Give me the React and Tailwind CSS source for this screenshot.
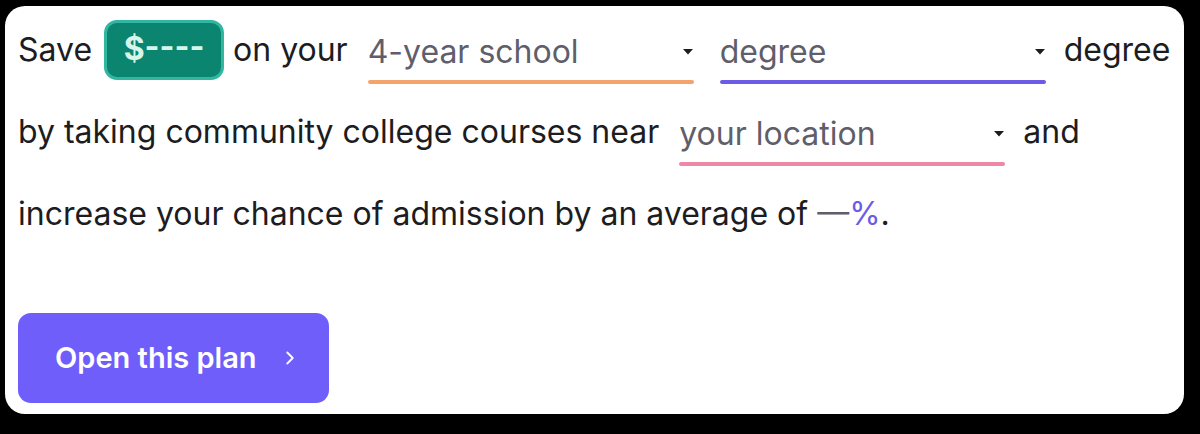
import { ChevronRight } from 'lucide-react';

const Caret = () => (
  <svg width="10" height="6" viewBox="0 0 10 6" className="shrink-0">
    <path d="M0 0 L10 0 L5 5.5 Z" fill="#1c1c21" />
  </svg>
);

const Picker = ({ label, line, className = '' }) => (
  <div className={`flex flex-col w-[326px] ${className}`}>
    <div className="flex items-center justify-between h-[44px] pr-[1px]">
      <span className="text-[#5f5e6b]">{label}</span>
      <Caret />
    </div>
    <div className={`h-[4px] rounded-full mt-[6px] ${line}`} />
  </div>
);

const App = () => {
  return (
    <div className="w-[1200px] h-[434px] bg-black pt-[6px] pl-[5px]" style={{ fontFamily: 'Inter, "Noto Sans", sans-serif' }}>
      <div className="w-[1179px] h-[408px] bg-white rounded-[20px] pl-[13px] text-[32px] text-[#1c1c21]">
        {/* row 1 */}
        <div className="flex items-center h-[86px] pt-[2px]">
          <span>Save</span>
          <div className="ml-[12px] w-[120px] h-[60px] rounded-[13px] bg-[#0b8470] border-[3px] border-[#30b6a1] flex items-center justify-center text-[#d6f6ec] font-bold text-[32px] pb-[2px]">
            $----
          </div>
          <span className="ml-[9px]">on your</span>
          <Picker label="4-year school" line="bg-[#f5a36c]" className="ml-[20px] mt-[14px]" />
          <Picker label="degree" line="bg-[#6c5be6]" className="ml-[26px] mt-[14px]" />
          <span className="ml-[18px]">degree</span>
        </div>

        {/* row 2 */}
        <div className="flex items-center h-[80px]">
          <span>by taking community college courses near</span>
          <Picker label="your location" line="bg-[#ef87a6]" className="ml-[20px] mt-[14px]" />
          <span className="ml-[18px]">and</span>
        </div>

        {/* row 3 */}
        <div className="flex items-center h-[84px]">
          <span>
            increase your chance of admission by an average of{' '}
            <span className="text-[#5f5e6b]">—</span>
            <span className="text-[#6c5be6]">%</span>.
          </span>
        </div>

        <button className="mt-[57px] w-[311px] h-[90px] rounded-[13px] bg-[#705efb] text-white flex items-center pl-[37px] text-[29px] font-semibold">
          Open this plan
          <ChevronRight size={22} strokeWidth={2} className="ml-[22px]" />
        </button>
      </div>
    </div>
  );
};

export default App;
